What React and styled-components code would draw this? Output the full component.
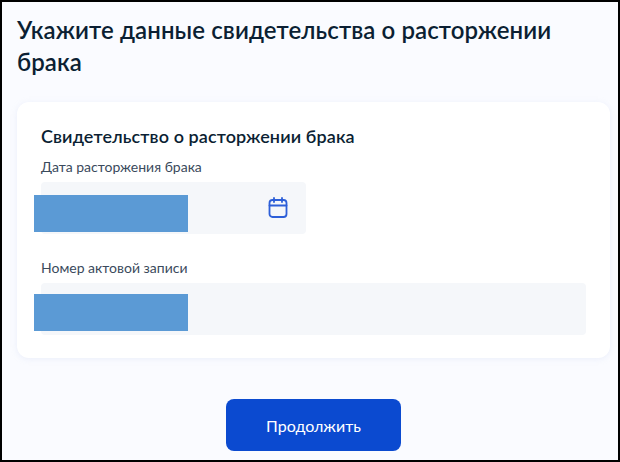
import React from "react";
import styled, { createGlobalStyle } from "styled-components";

const GlobalStyle = createGlobalStyle`
  html, body {
    margin: 0;
    padding: 0;
  }
  body {
    font-family: "Lato", "Noto Sans", sans-serif;
    color: #0b1f33;
  }
`;

const Page = styled.div`
  box-sizing: border-box;
  width: 620px;
  height: 462px;
  padding: 12px 0 0 15px;
  border: 2px solid #000;
  background: #fafbff;
  overflow: hidden;
`;

const Title = styled.h1`
  width: 560px;
  margin: 0 0 24px;
  font-size: 24px;
  line-height: 32px;
  font-weight: 600;
  letter-spacing: 0.1px;
  color: #0b1f33;
`;

const Card = styled.section`
  box-sizing: border-box;
  width: 593px;
  height: 256px;
  padding: 22px 24px 0;
  background: #fff;
  border-radius: 12px;
  box-shadow: 0 1px 6px rgba(180, 195, 230, 0.22);
`;

const CardTitle = styled.h2`
  margin: 0 0 11px;
  font-size: 18px;
  line-height: 24px;
  font-weight: 600;
  letter-spacing: 0.1px;
`;

const Field = styled.div`
  margin-bottom: ${(p) => p.$gap || 0}px;
`;

const Label = styled.div`
  font-size: 14px;
  line-height: 16px;
  height: 23px;
  color: #3a4a5c;
`;

const InputBox = styled.div`
  position: relative;
  box-sizing: border-box;
  display: flex;
  align-items: center;
  justify-content: flex-end;
  width: ${(p) => p.$width}px;
  height: 52px;
  padding-right: 18px;
  background: #f5f7fa;
  border-radius: 4px;
`;

const Redaction = styled.div`
  position: absolute;
  left: -7px;
  top: ${(p) => p.$top}px;
  width: 154px;
  height: 37px;
  background: #5b9ad5;
`;

const Actions = styled.div`
  display: flex;
  justify-content: center;
  width: 593px;
  margin-top: 41px;
`;

const Button = styled.button`
  width: 175px;
  height: 52px;
  border: 0;
  border-radius: 8px;
  background: #0b4ad0;
  color: #fff;
  font-family: inherit;
  font-size: 16px;
  font-weight: 400;
`;

const CalendarIcon = () => (
  <svg width="20" height="22" viewBox="0 0 20 22" fill="none" stroke="#2d5fd8" strokeWidth="1.8" strokeLinecap="round">
    <rect x="1.5" y="3" width="17" height="17" rx="3" />
    <path d="M1.5 8.5h17M6 1v4M14 1v4" />
  </svg>
);

const App = () => {
  return (
    <>
      <GlobalStyle />
      <Page>
        <Title>Укажите данные свидетельства о расторжении брака</Title>
        <Card>
          <CardTitle>Свидетельство о расторжении брака</CardTitle>
          <Field $gap={26}>
            <Label>Дата расторжения брака</Label>
            <InputBox $width={265}>
              <Redaction $top={13} />
              <CalendarIcon />
            </InputBox>
          </Field>
          <Field>
            <Label>Номер актовой записи</Label>
            <InputBox $width={545}>
              <Redaction $top={11} />
            </InputBox>
          </Field>
        </Card>
        <Actions>
          <Button>Продолжить</Button>
        </Actions>
      </Page>
    </>
  );
};

export default App;
